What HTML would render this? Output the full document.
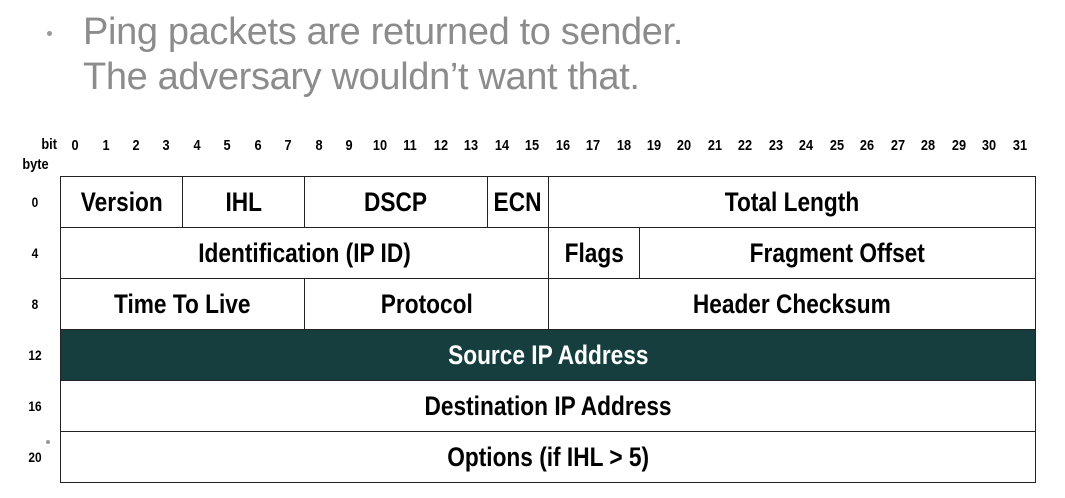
<!DOCTYPE html>
<html><head><meta charset="utf-8"><style>
body{margin:0;width:1065px;height:498px;background:#fff;position:relative;overflow:hidden;font-family:"Liberation Sans",sans-serif}
.t{position:absolute;left:83px;color:#8c8c8c;font-size:38px;line-height:45px;white-space:nowrap;letter-spacing:-0.35px}
.n{font-weight:bold;position:absolute;color:#000}
.b{font-size:15px;top:137px;width:30px;text-align:center;transform:scaleX(0.85)}
.c{position:absolute;border:1px solid #222;box-sizing:border-box;display:flex;align-items:center;justify-content:center;font-weight:bold;font-size:27px;color:#000;height:52px;white-space:nowrap}
.c span{display:inline-block;transform:scaleX(0.84)}
.r{font-size:14px;width:30px;text-align:center;left:20px;transform:scaleX(0.85)}
</style></head><body>
<div style="position:absolute;left:47px;top:31px;width:5px;height:5px;border-radius:50%;background:#999"></div>
<div class="t" style="top:10px">Ping packets are returned to sender.</div>
<div class="t" style="top:55px">The adversary wouldn’t want that.</div>
<div class="n" style="left:40px;top:136px;font-size:15px;transform:scaleX(0.85)">bit</div>
<div class="n" style="left:20px;top:156px;font-size:15px;transform:scaleX(0.85)">byte</div>
<div id="bits"></div>
<script>
var h='';for(var i=0;i<32;i++){h+='<div class="n b" style="left:'+(60+i*30.47).toFixed(1)+'px">'+i+'</div>';}
document.getElementById('bits').innerHTML=h;
</script>
<div class="n r" style="top:194px">0</div>
<div class="n r" style="top:245px">4</div>
<div class="n r" style="top:296px">8</div>
<div class="n r" style="top:347px">12</div>
<div class="n r" style="top:398px">16</div>
<div class="n r" style="top:449px">20</div>
<div style="position:absolute;left:46px;top:440px;width:4px;height:4px;border-radius:50%;background:#999"></div>
<div class="c" style="left:60px;top:176px;width:123px"><span>Version</span></div>
<div class="c" style="left:182px;top:176px;width:123px"><span>IHL</span></div>
<div class="c" style="left:304px;top:176px;width:184px"><span>DSCP</span></div>
<div class="c" style="left:487px;top:176px;width:62px"><span>ECN</span></div>
<div class="c" style="left:548px;top:176px;width:488px"><span>Total Length</span></div>
<div class="c" style="left:60px;top:227px;width:489px"><span>Identification (IP ID)</span></div>
<div class="c" style="left:548px;top:227px;width:92px"><span>Flags</span></div>
<div class="c" style="left:639px;top:227px;width:397px"><span>Fragment Offset</span></div>
<div class="c" style="left:60px;top:278px;width:245px"><span>Time To Live</span></div>
<div class="c" style="left:304px;top:278px;width:245px"><span>Protocol</span></div>
<div class="c" style="left:548px;top:278px;width:488px"><span>Header Checksum</span></div>
<div class="c" style="left:60px;top:329px;width:976px;background:#173e3e;color:#fff"><span>Source IP Address</span></div>
<div class="c" style="left:60px;top:380px;width:976px"><span>Destination IP Address</span></div>
<div class="c" style="left:60px;top:431px;width:976px"><span>Options (if IHL &gt; 5)</span></div>
</body></html>
